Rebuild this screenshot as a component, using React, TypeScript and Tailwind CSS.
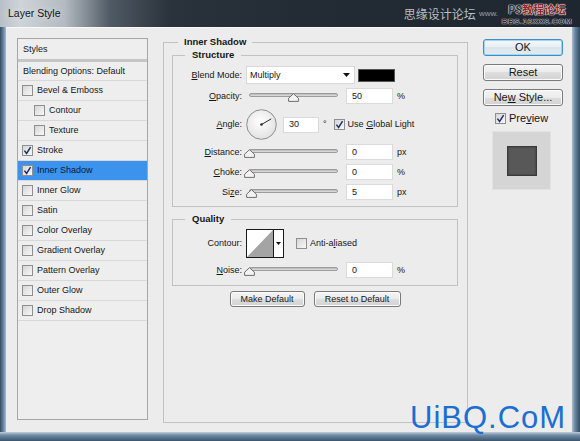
import React from "react";

function Cb({ checked }: { checked?: boolean }) {
  return (
    <span className="flex h-[11px] w-[11px] shrink-0 items-center justify-center border border-[#8f8f8f] bg-[linear-gradient(135deg,#d6d6d6,#f8f8f8)]">
      {checked && (
        <svg width="9" height="9" viewBox="0 0 9 9">
          <path d="M1.4 4.6 L3.6 7.4 L7.6 1.2" fill="none" stroke="#1d2f66" strokeWidth="1.5" />
        </svg>
      )}
    </span>
  );
}

function Slider({ value }: { value: number }) {
  return (
    <div className="relative ml-[4px] h-[16px] w-[92px] shrink-0">
      <div className="ml-[3px] mt-[5px] h-[4px] w-[89px] rounded-full border border-[#9c9c9c] bg-[linear-gradient(#b4b4b4,#e2e2e2)]" />
      <svg
        className="absolute top-[5px]"
        style={{ left: 3 + value * 89 - 5.5 }}
        width="11"
        height="9"
        viewBox="0 0 11 9"
      >
        <path d="M5.5 0.7 L10.4 5.2 L10.4 8.4 L0.6 8.4 L0.6 5.2 Z" fill="#f3f3f3" stroke="#6e6e6e" strokeLinejoin="round" />
      </svg>
    </div>
  );
}

function Field({ v }: { v: string }) {
  return (
    <div className="ml-[8px] flex h-[16px] w-[47px] shrink-0 items-center border border-[#dadada] bg-white pl-[5px]">
      {v}
    </div>
  );
}

function Label({ children }: { children: React.ReactNode }) {
  return <span className="w-[69px] shrink-0 text-right">{children}</span>;
}

function U({ children }: { children: React.ReactNode }) {
  return <span className="underline underline-offset-[1px]">{children}</span>;
}

function SliderRow({
  label,
  value,
  v,
  unit,
}: {
  label: React.ReactNode;
  value: number;
  v: string;
  unit: string;
}) {
  return (
    <div className="mt-[4px] flex h-[16px] items-center">
      <Label>{label}</Label>
      <Slider value={value} />
      <Field v={v} />
      <span className="ml-[4px]">{unit}</span>
    </div>
  );
}

function StyleRow({
  label,
  checked,
  sub,
  active,
}: {
  label: string;
  checked?: boolean;
  sub?: boolean;
  active?: boolean;
}) {
  return (
    <div
      className={
        "flex h-[20px] items-center border-b border-[#d8d8d8] " +
        (sub ? "pl-[16px] " : "pl-[4px] ") +
        (active ? "bg-[#3b93ee] text-[#0c1838]" : "")
      }
    >
      <Cb checked={checked} />
      <span className="ml-[4px]">{label}</span>
    </div>
  );
}

function WinButton({ children, def }: { children: React.ReactNode; def?: boolean }) {
  return (
    <div
      className={
        "flex h-[17px] w-[80px] items-center justify-center rounded-[3px] border text-[11px] " +
        (def
          ? "border-[#3e8fc8] bg-[linear-gradient(#f4f8fb,#e8eef3_50%,#dbe5ec_50%,#e3ebf1)] shadow-[inset_0_0_0_1px_#9fd6f3]"
          : "border-[#7a7a7a] bg-[linear-gradient(#f4f4f4,#ebebeb_50%,#dedede_50%,#d2d2d2)] shadow-[inset_0_0_0_1px_#fbfbfb]")
      }
    >
      <span>{children}</span>
    </div>
  );
}

function SmallButton({ children, w }: { children: React.ReactNode; w: string }) {
  return (
    <div
      className={
        (w === "75" ? "w-[75px] " : "w-[87px] ") +
        "flex h-[16px] items-center justify-center rounded-[3px] border border-[#7a7a7a] bg-[linear-gradient(#f4f4f4,#ebebeb_50%,#dedede_50%,#d2d2d2)] shadow-[inset_0_0_0_1px_#fbfbfb]"
      }
    >
      {children}
    </div>
  );
}

export default function App() {
  return (
    <div className="relative flex h-[441px] w-[580px] flex-col overflow-hidden bg-[#4d6b86] font-['Liberation_Sans',Arial,sans-serif] text-[9px] leading-none text-[#161616]">
      {/* Title bar */}
      <div className="flex h-[27px] shrink-0 items-center bg-[linear-gradient(90deg,#b8bfc6_0px,#cfd4d8_20px,#b3bac1_65px,#505a64_110px,#2a323b_170px,#232b34_300px,#1e2630_100%)]">
        <span className="ml-[8px] text-[10.5px] text-[#121212] [text-shadow:0_0_6px_#e8ecef]">Layer Style</span>
        <span className="ml-auto font-['Noto_Sans_CJK_SC',sans-serif] text-[12px] text-[#b9bec3]">思缘设计论坛</span>
        <span className="ml-[3px] text-[8px] text-[#9aa0a6]">www.</span>
        <div className="ml-[2px] mr-[6px] flex w-[74px] flex-col items-center">
          <span className="font-['Noto_Sans_CJK_SC',sans-serif] text-[11px] font-bold leading-[16px] text-[#2b3138] [text-shadow:0_0_1px_#fff,0_0_1px_#fff,0_0_1px_#fff]">
            PS<span className="text-[#8a2a2a]">教程论坛</span>
          </span>
          <span className="text-[8px] font-bold leading-[9px] tracking-[0.5px] text-[#1e2731] [text-shadow:0_0_1px_#fff,0_0_1px_#fff]">
            BBS.16XX8.COM
          </span>
        </div>
      </div>

      {/* Middle */}
      <div className="flex h-[405px] shrink-0">
        <div className="w-[6px] bg-[linear-gradient(90deg,#324b63,#6584a0_55%,#a8bccd)]" />
        <div className="flex w-[566px] items-start border-t border-[#f8f8f8] bg-[#ececec] pl-[11px]">
          {/* Styles list */}
          <div className="mt-[10px] h-[382px] w-[131px] shrink-0 border border-[#a6a6a6] bg-[#eeeeee]">
            <div className="flex h-[20px] items-center pl-[5px]">Styles</div>
            <div className="h-[3px] bg-[#c6c6c6]" />
            <div className="flex h-[19px] items-center border-b border-[#d8d8d8] pl-[5px]">Blending Options: Default</div>
            <StyleRow label="Bevel & Emboss" />
            <StyleRow label="Contour" sub />
            <StyleRow label="Texture" sub />
            <StyleRow label="Stroke" checked />
            <StyleRow label="Inner Shadow" checked active />
            <StyleRow label="Inner Glow" />
            <StyleRow label="Satin" />
            <StyleRow label="Color Overlay" />
            <StyleRow label="Gradient Overlay" />
            <StyleRow label="Pattern Overlay" />
            <StyleRow label="Outer Glow" />
            <StyleRow label="Drop Shadow" />
          </div>

          {/* Inner Shadow group */}
          <fieldset className="ml-[15px] mt-[8px] h-[387px] w-[305px] shrink-0 border border-[#c2c2c2]">
            <legend className="ml-[14px] px-[6px] text-[9.5px] font-bold leading-[12px]">Inner Shadow</legend>
            <div className="flex flex-col pl-[8px] pr-[9px]">
              <fieldset className="mt-[1px] h-[158px] border border-[#c2c2c2]">
                <legend className="ml-[12px] px-[7px] text-[9.5px] font-bold leading-[12px]">Structure</legend>
                <div className="flex flex-col">
                  <div className="mt-[5px] flex h-[18px] items-center">
                    <Label>
                      <U>B</U>lend Mode:
                    </Label>
                    <div className="ml-[4px] flex h-[18px] w-[109px] items-center border border-[#d8d8d8] bg-white pl-[3px]">
                      <span>Multiply</span>
                      <svg className="ml-auto mr-[4px]" width="7" height="4" viewBox="0 0 7 4">
                        <path d="M0 0 L7 0 L3.5 4 Z" fill="#111" />
                      </svg>
                    </div>
                    <div className="ml-[3px] h-[13px] w-[37px] border border-[#555] bg-black" />
                  </div>
                  <SliderRow label={<><U>O</U>pacity:</>} value={0.5} v="50" unit="%" />
                  <div className="mt-[5px] flex h-[31px] items-center">
                    <Label>
                      <U>A</U>ngle:
                    </Label>
                    <svg className="ml-[4px] shrink-0" width="31" height="31" viewBox="0 0 31 31">
                      <defs>
                        <radialGradient id="dial" cx="45%" cy="40%" r="60%">
                          <stop offset="0%" stopColor="#ffffff" />
                          <stop offset="100%" stopColor="#e2e2e2" />
                        </radialGradient>
                      </defs>
                      <circle cx="15.5" cy="15.5" r="14.8" fill="url(#dial)" stroke="#8e8e8e" />
                      <line x1="15.5" y1="15.5" x2="25.2" y2="9.9" stroke="#2a2a2a" strokeWidth="1" />
                      <circle cx="15.5" cy="15.5" r="1.3" fill="#2a2a2a" />
                    </svg>
                    <div className="ml-[6px] flex h-[16px] w-[36px] items-center border border-[#dadada] bg-white pl-[5px]">30</div>
                    <span className="ml-[4px]">°</span>
                    <span className="ml-[7px]">
                      <Cb checked />
                    </span>
                    <span className="ml-[3px]">
                      Use <U>G</U>lobal Light
                    </span>
                  </div>
                  <SliderRow label={<><U>D</U>istance:</>} value={0} v="0" unit="px" />
                  <SliderRow label={<><U>C</U>hoke:</>} value={0} v="0" unit="%" />
                  <SliderRow label={<>Si<U>z</U>e:</>} value={0.03} v="5" unit="px" />
                </div>
              </fieldset>

              <fieldset className="mt-[6px] h-[73px] border border-[#c2c2c2]">
                <legend className="ml-[12px] px-[7px] text-[9.5px] font-bold leading-[12px]">Quality</legend>
                <div className="flex flex-col">
                  <div className="mt-[4px] flex h-[29px] items-center">
                    <Label>Contour:</Label>
                    <div className="ml-[4px] flex h-[29px] w-[38px] border border-[#1a1a1a] bg-white">
                      <svg width="26" height="27" viewBox="0 0 26 27">
                        <rect x="0" y="0" width="26" height="27" fill="#fff" />
                        <path d="M0 27 L26 0 L26 27 Z" fill="#a4a4a4" />
                      </svg>
                      <div className="flex flex-1 items-center justify-center border-l border-[#1a1a1a]">
                        <svg width="5" height="3" viewBox="0 0 5 3">
                          <path d="M0 0 L5 0 L2.5 3 Z" fill="#111" />
                        </svg>
                      </div>
                    </div>
                    <span className="ml-[12px]">
                      <Cb />
                    </span>
                    <span className="ml-[3px]">
                      Anti-a<U>l</U>iased
                    </span>
                  </div>
                  <SliderRow label={<><U>N</U>oise:</>} value={0} v="0" unit="%" />
                </div>
              </fieldset>

              <div className="mt-[5px] flex justify-center gap-[9px]">
                <SmallButton w="75">Make Default</SmallButton>
                <SmallButton w="87">Reset to Default</SmallButton>
              </div>
            </div>
          </fieldset>

          {/* Right column */}
          <div className="ml-[15px] mt-[11px] flex w-[80px] shrink-0 flex-col">
            <WinButton def>OK</WinButton>
            <div className="mt-[8px]">
              <WinButton>Reset</WinButton>
            </div>
            <div className="mt-[8px]">
              <WinButton>
                Ne<U>w</U> Style...
              </WinButton>
            </div>
            <div className="ml-[12px] mt-[7px] flex items-center text-[11px]">
              <Cb checked />
              <span className="ml-[3px]">
                Pre<U>v</U>iew
              </span>
            </div>
            <div className="ml-[9px] mt-[7px] flex h-[59px] w-[59px] items-center justify-center border border-[#e2e2e2] bg-[#d5d5d5]">
              <div className="h-[30px] w-[30px] border border-[#3a3a3a] bg-[#585858] shadow-[inset_0_0_2px_#2e2e2e]" />
            </div>
          </div>
        </div>
        <div className="w-[8px] bg-[linear-gradient(90deg,#a8bccd,#6584a0_40%,#324b63)]" />
      </div>

      {/* Bottom frame */}
      <div className="h-[9px] shrink-0 bg-[linear-gradient(180deg,#c1ced9,#6f8ca6_35%,#3c556c)]" />

      {/* Watermark */}
      <span className="absolute left-[410px] top-[402px] text-[31px] leading-[31px] tracking-[1px] text-[#1b6ed2]">
        UiBQ.CoM
      </span>
    </div>
  );
}
